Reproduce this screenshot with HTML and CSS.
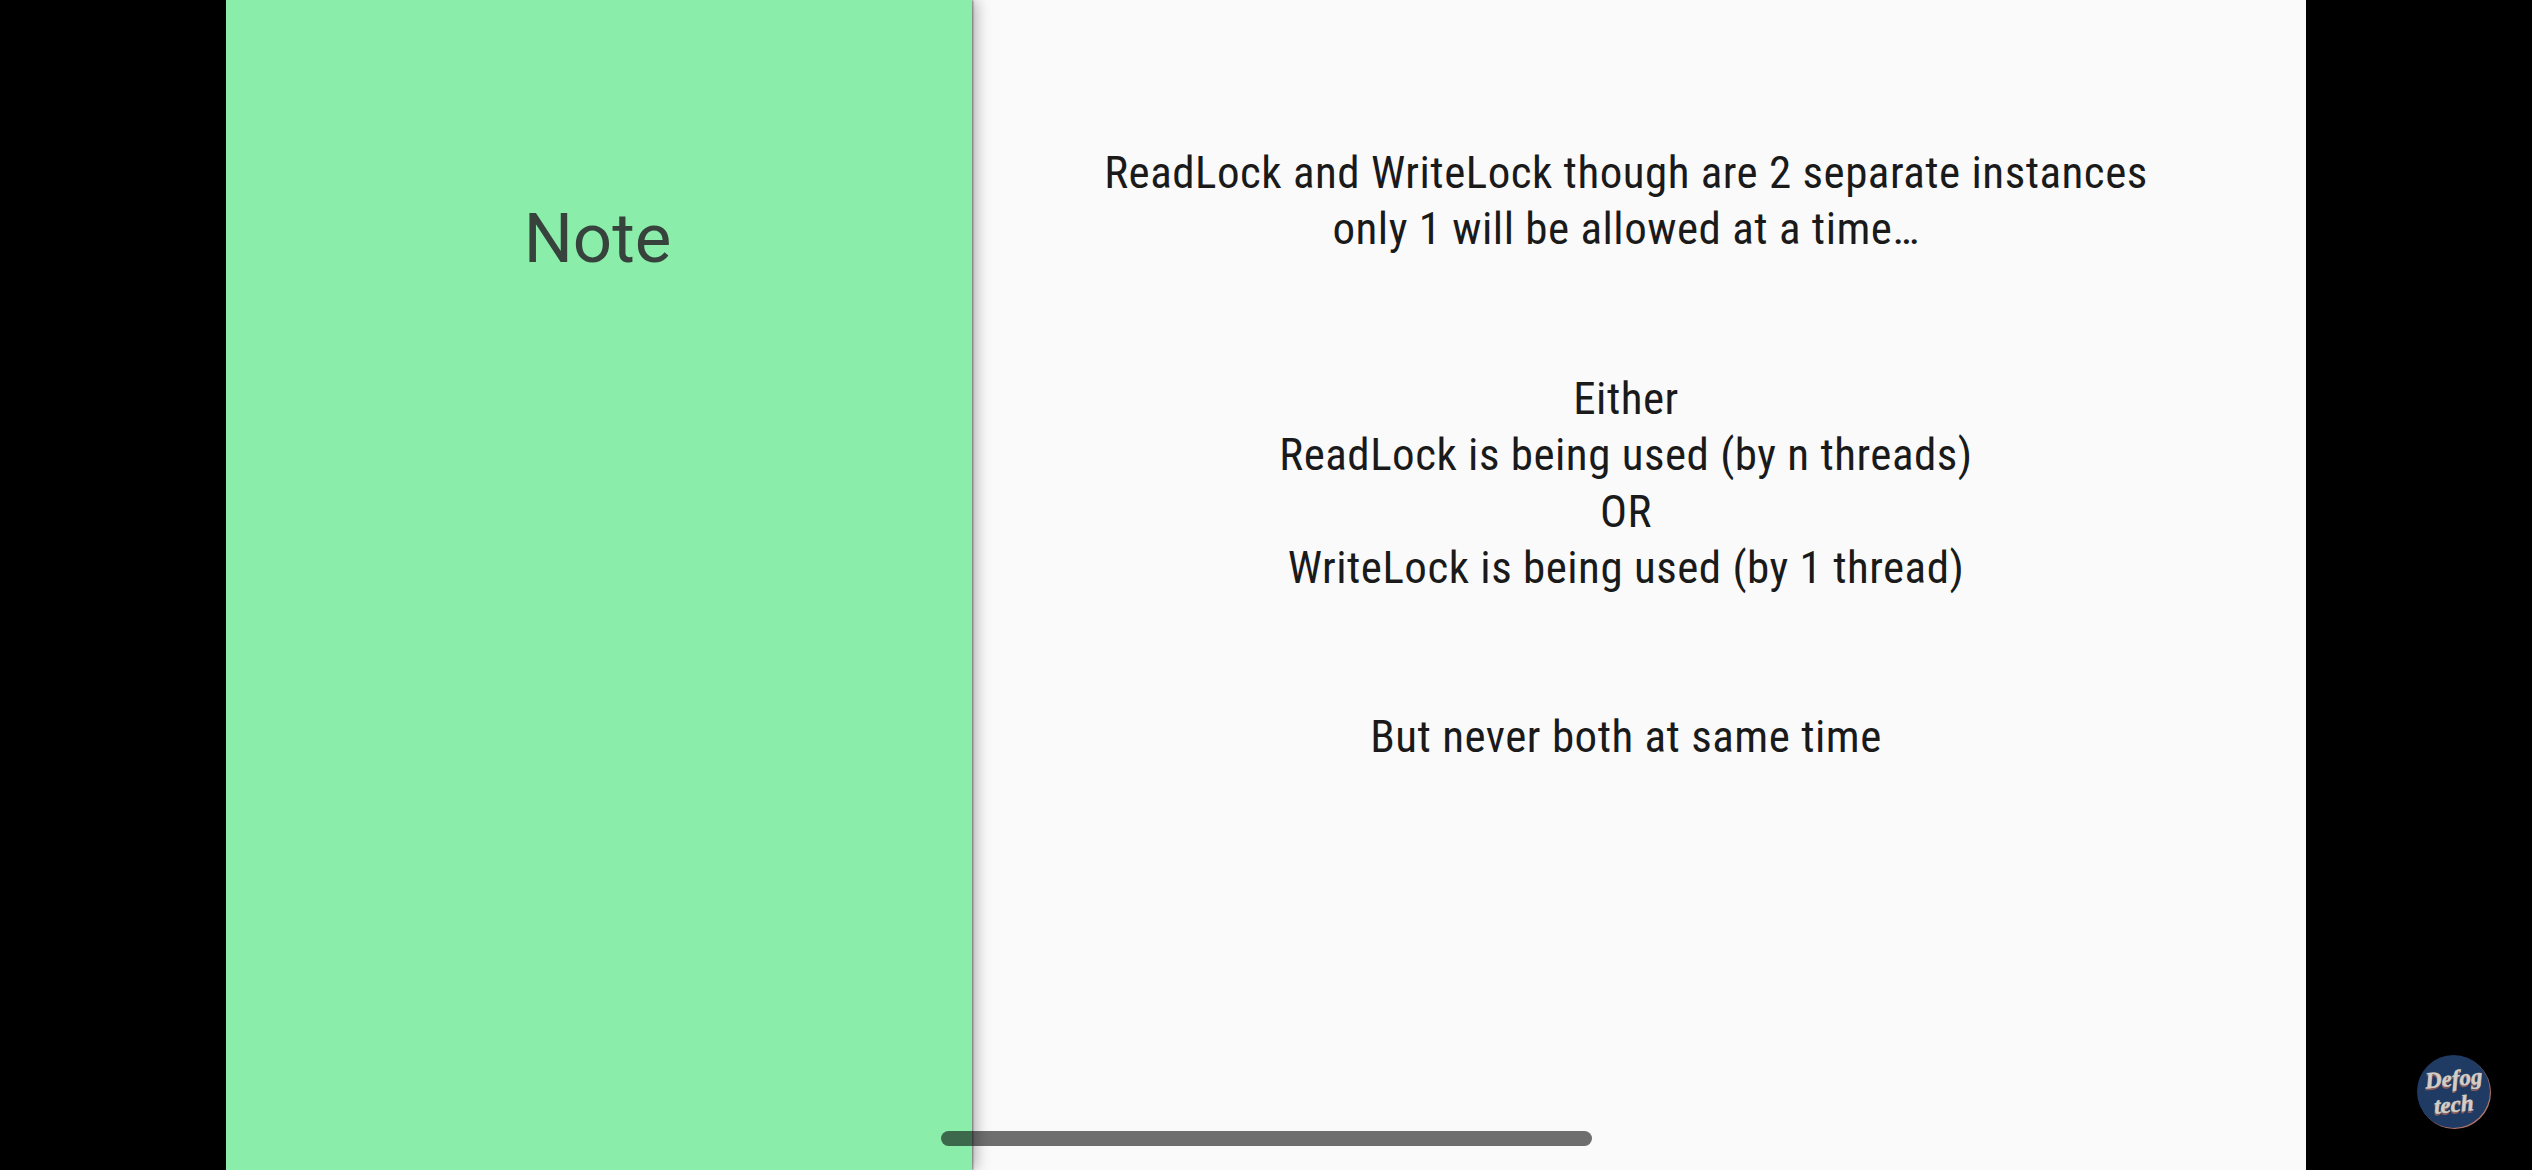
FILE: index.html
```html
<!DOCTYPE html>
<html lang="en">
<head>
<meta charset="utf-8">
<title>Note</title>
<link rel="stylesheet" href="styles.css">
</head>
<body>
<main class="slide">
  <aside class="side">
    <h1 class="side-title">Note</h1>
  </aside>
  <section class="content">
    <p class="para">ReadLock and WriteLock though are 2 separate instances<br>only 1 will be allowed at a time…</p>
    <p class="para">Either<br>ReadLock is being used (by n threads)<br>OR<br>WriteLock is being used (by 1 thread)</p>
    <p class="para">But never both at same time</p>
  </section>
</main>
<div class="home-bar"></div>
<div class="logo"><span class="logo-word">Defog</span><span class="logo-word">tech</span></div>
</body>
</html>
```
FILE: styles.css
```css
* { box-sizing: border-box; }
html, body { margin: 0; height: 100%; background: #000; overflow: hidden; }
body { display: flex; justify-content: flex-start; padding-left: 226px; }
.slide { width: 2080px; height: 1170px; display: flex; background: #fafafa; }
.side {
  width: 746px; flex: none; background: #8aeeaa;
  display: flex; justify-content: center; align-items: flex-start;
  box-shadow: 1px 0 2px rgba(0,0,0,.45), 4px 0 14px rgba(0,0,0,.3);
  position: relative;
  padding-top: 191px;
  padding-right: 3px;
}
.side-title {
  margin: 0; font: 400 69px/96px Roboto, sans-serif; color: #37423c;
}
.content {
  flex: 1; padding: 145px 26px 0 0;
  display: flex; flex-direction: column; gap: 113px;
  font-family: Roboto, sans-serif; font-size: 45px; line-height: 56.4px;
  font-stretch: 75%; letter-spacing: .5px; color: #1a1a1a; text-align: center;
}
.para { margin: 0; }
.home-bar {
  position: absolute; left: 941px; top: 1131px; width: 651px; height: 15px;
  border-radius: 8px; background: rgba(0,0,0,.56);
}
.logo {
  position: absolute; left: 2417px; top: 1055px; width: 73px; height: 73px;
  border-radius: 50%; background: #1f3a63;
  box-shadow: 1px 1px 0 #b5746a;
  display: flex; flex-direction: column; align-items: center; justify-content: center;
  font: italic 700 23px/26px "Liberation Serif", serif; color: #d2cdc6;
  -webkit-text-stroke: .5px #d2cdc6;
  text-shadow: -1px 2px 0 #8a5a58;
}
.logo-word { display: block; transform: rotate(-5deg); }
```
